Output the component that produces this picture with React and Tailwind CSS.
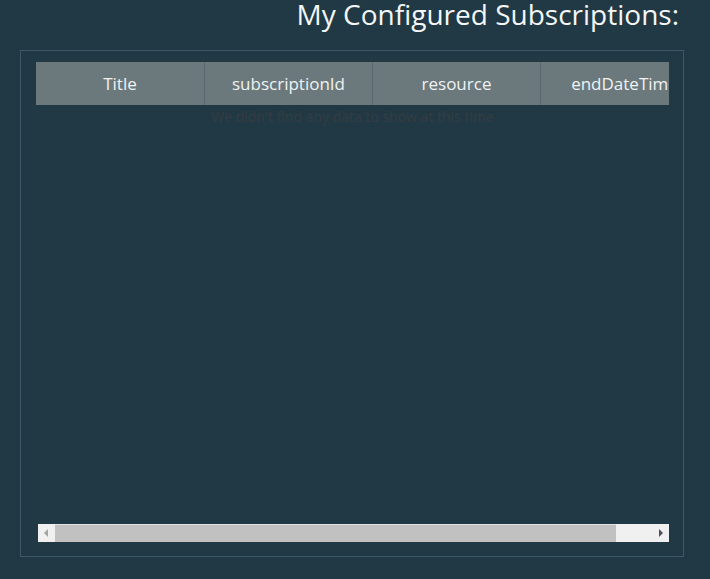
import React from 'react';

const columns = ['Title', 'subscriptionId', 'resource', 'endDateTime'];

function ScrollBar() {
  return (
    <div className="ml-[2px] flex h-[18px] w-[631px] bg-[#f0f0f0]">
      <div className="flex w-[17px] items-center justify-center">
        <svg width="5" height="8" viewBox="0 0 5 8">
          <path d="M4 0 L0 4 L4 8 Z" fill="#a3a3a3" />
        </svg>
      </div>
      <div className="h-full w-[561px] border-t border-[#e2e2e2] bg-[#c1c1c1]" />
      <div className="flex flex-1 items-center justify-end pr-[6px]">
        <svg width="5" height="8" viewBox="0 0 5 8">
          <path d="M1 0 L5 4 L1 8 Z" fill="#505050" />
        </svg>
      </div>
    </div>
  );
}

export default function App() {
  return (
    <div
      className="h-[579px] w-full overflow-hidden bg-[#203945]"
      style={{ fontFamily: '"Open Sans", "Liberation Sans", sans-serif' }}
    >
      <h1 className="pr-[31px] text-right text-[28px] leading-[28px] text-[#f4f6f7]">
        My Configured Subscriptions:
      </h1>

      <div className="ml-[20px] mt-[22px] h-[507px] w-[664px] border border-[#3b5a67] pl-[15px] pt-[11px]">
        <div className="flex h-[462px] w-[633px] flex-col">
          <div className="w-[633px] overflow-hidden">
            <div className="flex h-[43px] w-max bg-[#6b797d]">
              {columns.map((col, i) => (
                <div
                  key={col}
                  className={`flex w-[168px] shrink-0 items-center justify-center text-[17px] text-[#f0f2f2] ${i > 0 ? 'border-l border-[#5a686d]' : ''}`}
                >
                  {col}
                </div>
              ))}
            </div>
          </div>
          <p className="mt-[2px] text-center text-[14px] leading-[20px] text-[#353d41]">
            We didn't find any data to show at this time
          </p>
          <div className="flex-1" />
        </div>
        <ScrollBar />
      </div>
    </div>
  );
}
